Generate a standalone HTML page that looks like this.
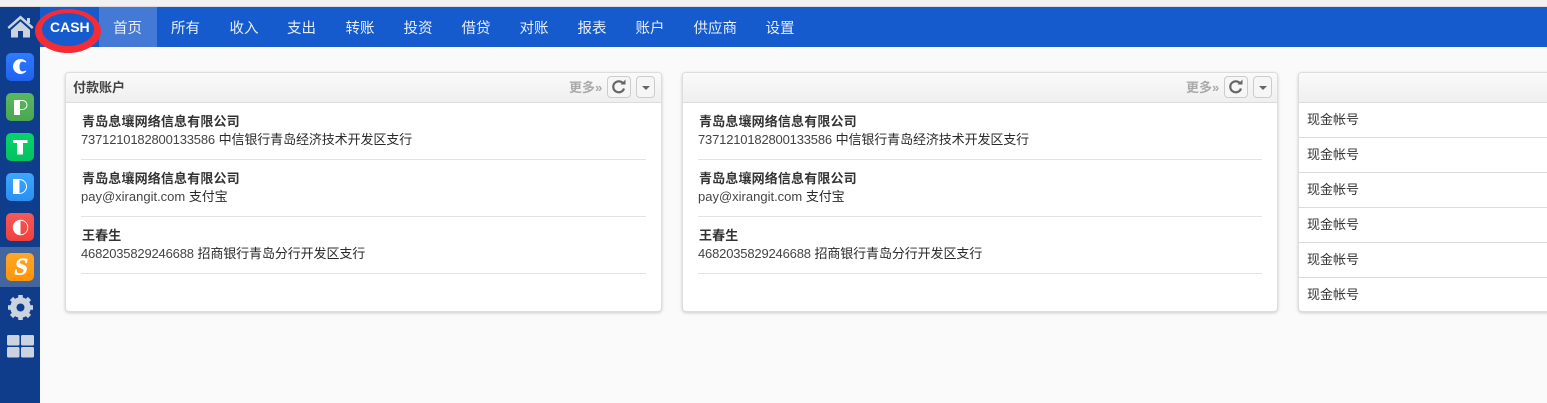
<!DOCTYPE html>
<html lang="zh-CN">
<head>
<meta charset="utf-8">
<style>
html,body{margin:0;padding:0;width:1547px;height:403px;overflow:hidden;background:#fafafa;font-family:"Liberation Sans","Noto Sans CJK SC",sans-serif;font-size:13px;color:#333}
*{box-sizing:border-box}
#top{position:absolute;left:0;top:0;width:1547px;height:7px;background:#f1f1f1;border-bottom:1px solid #dcdcdc}
#nav{position:absolute;left:40px;top:7px;width:1507px;height:40px;background:#155bcd}
#side{position:absolute;left:0;top:7px;width:40px;height:396px;background:#0f3d8c}
#act{position:absolute;left:99px;top:7px;width:58px;height:40px;background:#4479d6}
.n{position:absolute;top:18px;font-size:14.500px;line-height:20px;color:#e6eefb;white-space:nowrap;font-family:"Noto Sans CJK SC","Liberation Sans",sans-serif}
#cash{position:absolute;left:50px;top:19px;font-size:14px;line-height:17px;font-weight:bold;color:#fff;white-space:nowrap}
.ic{position:absolute;left:6px;width:28px;height:28px;border-radius:5px}
.panel{position:absolute;top:72px;height:240px;width:597px;background:#fff;border:1px solid #ddd;border-radius:4px;box-shadow:0 1px 3px rgba(0,0,0,.18);overflow:hidden}
.hd{position:absolute;left:0;top:0;right:0;height:30px;background:linear-gradient(#fafafa,#efefef);border-bottom:1px solid #dcdcdc}
.ti{position:absolute;left:7px;top:6px;font-size:13px;line-height:17px;font-weight:bold;color:#444}
.more{position:absolute;left:503px;top:6px;font-size:13px;line-height:17px;font-weight:bold;color:#aaa;white-space:nowrap}
.b1{position:absolute;left:541px;top:3px;width:24px;height:22px;border:1px solid #ccc;border-radius:4px;background:#f6f6f6}
.b2{position:absolute;left:570px;top:3px;width:19px;height:22px;border:1px solid #ccc;border-radius:4px;background:#f6f6f6}
.b2 i{position:absolute;left:5px;top:9px;width:0;height:0;border-left:4px solid transparent;border-right:4px solid transparent;border-top:4px solid #666}
.name{position:absolute;left:16px;font-size:13px;line-height:18px;font-weight:bold;color:#333;white-space:nowrap;letter-spacing:.15px}
.acc{position:absolute;left:15px;font-size:13px;line-height:18px;color:#444;white-space:nowrap}
.acc b{font-weight:normal;color:#2a2a2a;letter-spacing:-.1px}
.acc u{text-decoration:none;letter-spacing:-.18px}
.sep{position:absolute;left:15px;width:565px;height:1px;background:#e3e3e3}
.cl{position:absolute;left:0;right:0;height:1px;background:#dcdcdc}
.cash{position:absolute;left:8px;font-size:13px;line-height:17px;color:#333;white-space:nowrap}
</style>
</head>
<body>
<div id="top"></div>
<div id="nav"></div>
<div id="side"></div>
<div style="position:absolute;left:0;top:247px;width:40px;height:40px;background:#43669f"></div>
<div id="act"></div>
<div id="cash">CASH</div>
<svg style="position:absolute;left:0;top:0" width="110" height="60" viewBox="0 0 110 60"><path fill-rule="evenodd" fill="#f42c35" d="M35 31 A33 22 0 1 1 101 31 A33 22 0 1 1 35 31 Z M42 29.500 A26 16.500 0 1 0 94 29.500 A26 16.500 0 1 0 42 29.500 Z"/></svg>
<div class="n" style="left:113px">首页</div>
<div class="n" style="left:171px">所有</div>
<div class="n" style="left:229.500px">收入</div>
<div class="n" style="left:287px">支出</div>
<div class="n" style="left:345.500px">转账</div>
<div class="n" style="left:403.500px">投资</div>
<div class="n" style="left:461.500px">借贷</div>
<div class="n" style="left:519.500px">对账</div>
<div class="n" style="left:577.500px">报表</div>
<div class="n" style="left:635.500px">账户</div>
<div class="n" style="left:693.500px">供应商</div>
<div class="n" style="left:765.500px">设置</div>

<svg style="position:absolute;left:7px;top:15px" width="27" height="24" viewBox="0 0 27 24"><path d="M0.500 12 L13.500 0.500 L26.500 12 L25 14 L13.500 4 L2 14 Z" fill="#ccd3e0"/><path d="M4 15 L13.500 6.500 L23 15 V22.500 H16 V16 H11 V22.500 H4 Z" fill="#ccd3e0"/><rect x="20" y="3" width="3" height="5" fill="#ccd3e0"/></svg>

<div class="ic" style="top:53px;background:linear-gradient(#2f7bff,#1f61f0)"><svg width="28" height="28"><path d="M20.500 9 A7.500 7.500 0 1 0 20.500 18 L19.500 17.500 C15 20 13.500 17 13.500 13.500 C13.500 10 15 7 19.500 9.500 Z" fill="#fff"/></svg></div>
<div class="ic" style="top:93px;background:linear-gradient(#5cb860,#4aa650)"><svg width="28" height="28"><rect x="8" y="7" width="6" height="15" fill="#fff"/><path d="M14 7.500 H16.500 A4.500 4.500 0 0 1 16.500 16.500 H14" fill="none" stroke="#fff" stroke-width="1"/></svg></div>
<div class="ic" style="top:133px;background:linear-gradient(#06d46c,#04c25f)"><svg width="28" height="28"><rect x="7" y="7" width="14.500" height="3" fill="#fff"/><rect x="11" y="7" width="6" height="14.500" fill="#fff"/></svg></div>
<div class="ic" style="top:173px;background:linear-gradient(#3fa6ff,#2a8ff2)"><svg width="28" height="28"><rect x="7" y="6" width="6.500" height="15" fill="#fff"/><path d="M13.500 6.500 A7 7 0 0 1 13.500 20.500" fill="none" stroke="#fff" stroke-width="1"/></svg></div>
<div class="ic" style="top:213px;background:linear-gradient(#f55a5a,#ef413c)"><svg width="28" height="28"><circle cx="14.500" cy="14.500" r="7.300" fill="none" stroke="#fff" stroke-width=".8"/><path d="M14.500 7 A7.500 7.500 0 0 0 14.500 22 Z" fill="#fff"/></svg></div>
<div class="ic" style="top:253px;background:linear-gradient(#ffa726,#ff9408)"><svg width="28" height="28"><text transform="translate(14 21.500) skewX(-10)" text-anchor="middle" font-family="Liberation Serif,serif" font-size="24" font-weight="bold" fill="#fff" stroke="#fff" stroke-width=".5">S</text></svg></div>

<svg style="position:absolute;left:8px;top:295px" width="25" height="25" viewBox="0 0 25 25"><circle cx="12.500" cy="12.500" r="7.500" fill="none" stroke="#ccd3e0" stroke-width="5.500"/><g stroke="#ccd3e0" stroke-width="4.500"><line x1="12.500" y1="0" x2="12.500" y2="25"/><line x1="0" y1="12.500" x2="25" y2="12.500"/><line x1="3.500" y1="3.500" x2="21.500" y2="21.500"/><line x1="21.500" y1="3.500" x2="3.500" y2="21.500"/></g><circle cx="12.500" cy="12.500" r="4" fill="#0f3d8c"/></svg>
<svg style="position:absolute;left:7px;top:335px" width="27" height="23" viewBox="0 0 27 23"><g fill="#ccd3e0"><rect x="0" y="0" width="12.500" height="10.500" rx="1.500"/><rect x="14" y="0" width="13" height="10.500" rx="1.500"/><rect x="0" y="12" width="12.500" height="10.500" rx="1.500"/><rect x="14" y="12" width="13" height="10.500" rx="1.500"/></g></svg>

<div class="panel" style="left:65px">
  <div class="hd"></div>
  <div class="ti">付款账户</div>
  <div class="more">更多»</div>
  <div class="b1"><svg width="22" height="20" style="position:absolute;left:0;top:0"><path d="M15.500 7 A5.500 5.500 0 1 0 16 11.500" fill="none" stroke="#666" stroke-width="2.200"/><path d="M12.500 7.500 H17.500 V2.500 Z" fill="#666"/></svg></div>
  <div class="b2"><i></i></div>
  <div class="name" style="top:40px">青岛息壤网络信息有限公司</div>
  <div class="acc" style="top:58px"><u>7371210182800133586</u> <b>中信银行青岛经济技术开发区支行</b></div>
  <div class="sep" style="top:86px"></div>
  <div class="name" style="top:97px">青岛息壤网络信息有限公司</div>
  <div class="acc" style="top:115px">pay@xirangit.com <b>支付宝</b></div>
  <div class="sep" style="top:143px"></div>
  <div class="name" style="top:154px">王春生</div>
  <div class="acc" style="top:172px"><u>4682035829246688</u> <b>招商银行青岛分行开发区支行</b></div>
  <div class="sep" style="top:200px"></div>
</div>

<div class="panel" style="left:682px;width:596px">
  <div class="hd"></div>
  <div class="more">更多»</div>
  <div class="b1"><svg width="22" height="20" style="position:absolute;left:0;top:0"><path d="M15.500 7 A5.500 5.500 0 1 0 16 11.500" fill="none" stroke="#666" stroke-width="2.200"/><path d="M12.500 7.500 H17.500 V2.500 Z" fill="#666"/></svg></div>
  <div class="b2"><i></i></div>
  <div class="name" style="top:40px">青岛息壤网络信息有限公司</div>
  <div class="acc" style="top:58px"><u>7371210182800133586</u> <b>中信银行青岛经济技术开发区支行</b></div>
  <div class="sep" style="top:86px;width:564px"></div>
  <div class="name" style="top:97px">青岛息壤网络信息有限公司</div>
  <div class="acc" style="top:115px">pay@xirangit.com <b>支付宝</b></div>
  <div class="sep" style="top:143px;width:564px"></div>
  <div class="name" style="top:154px">王春生</div>
  <div class="acc" style="top:172px"><u>4682035829246688</u> <b>招商银行青岛分行开发区支行</b></div>
  <div class="sep" style="top:200px;width:564px"></div>
</div>

<div class="panel" style="left:1298px;width:300px">
  <div class="hd"></div>
  <div class="cash" style="top:38px">现金帐号</div>
  <div class="cl" style="top:64px"></div>
  <div class="cash" style="top:73px">现金帐号</div>
  <div class="cl" style="top:99px"></div>
  <div class="cash" style="top:108px">现金帐号</div>
  <div class="cl" style="top:134px"></div>
  <div class="cash" style="top:143px">现金帐号</div>
  <div class="cl" style="top:169px"></div>
  <div class="cash" style="top:178px">现金帐号</div>
  <div class="cl" style="top:204px"></div>
  <div class="cash" style="top:213px">现金帐号</div>
</div>
</body>
</html>
